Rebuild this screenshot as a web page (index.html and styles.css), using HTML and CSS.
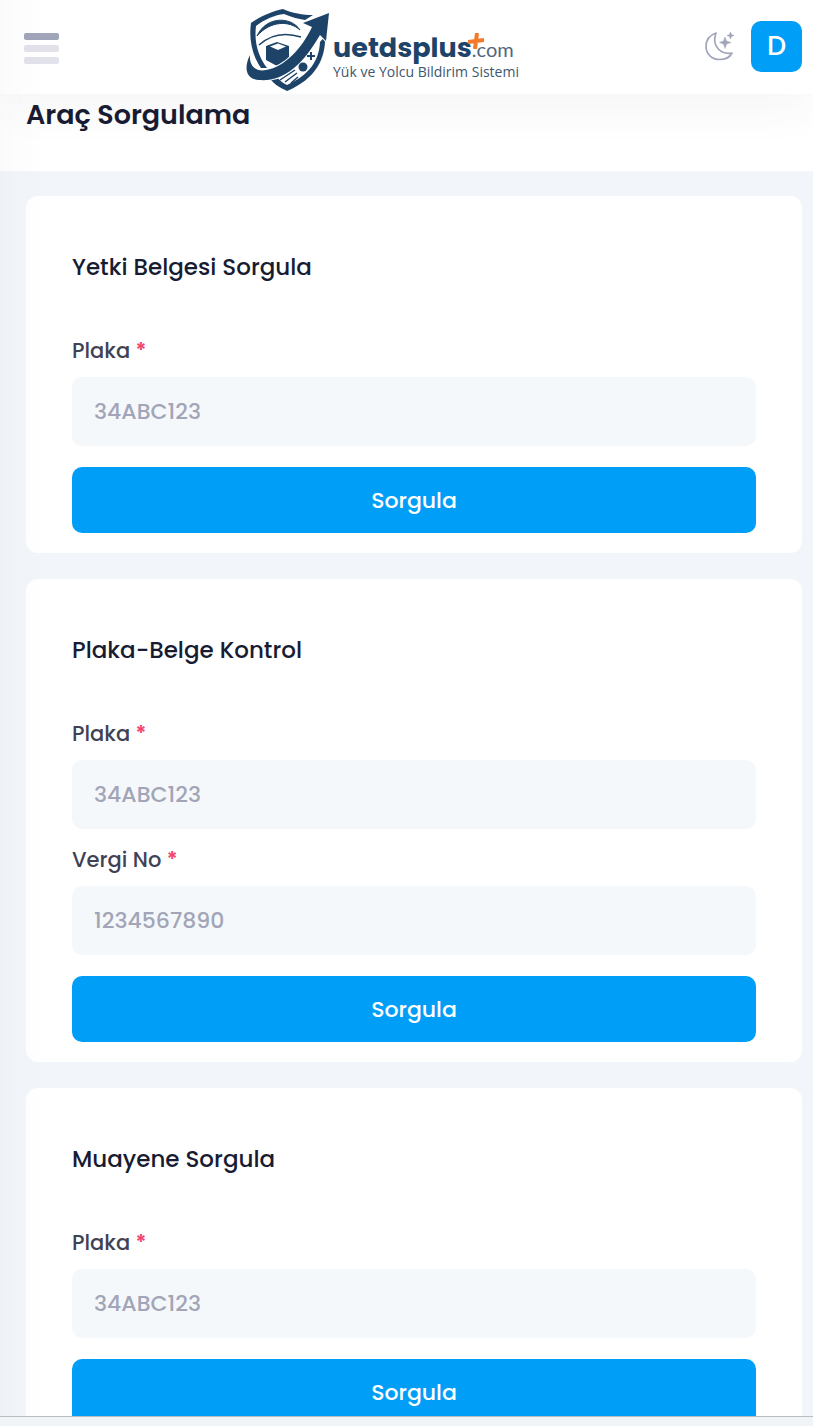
FILE: index.html
```
<!DOCTYPE html>
<html lang="tr">
<head>
<meta charset="utf-8">
<meta name="viewport" content="width=device-width, initial-scale=1">
<title>Araç Sorgulama</title>
<link rel="stylesheet" href="styles.css">
</head>
<body>
<header class="header">
  <button class="menu" type="button" aria-label="Menü">
    <svg width="35" height="32" viewBox="0 0 35 32"><rect y="1" width="35" height="7" rx="2" fill="#a1a5b9"/><rect y="13" width="35" height="7" rx="2" fill="#e2e2ea"/><rect y="25" width="35" height="7" rx="2" fill="#e2e2ea"/></svg>
  </button>
  <a class="brand" href="#">
    <svg class="brand-mark" width="86" height="84" viewBox="0 0 86 84" fill="none" stroke="#1d4468" aria-hidden="true">
      <path d="M68 7C58 7 47 5 38 1C28 3 16 8 6 15C4 29 6 46 16 60L22 60C13 48 9 34 11 18C20 11 30 7 39 6C46 9 53 11 60 12Z" fill="#1d4468" stroke="none"/>
      <path d="M80 28C81 50 71 71 42 83C36 80 30 77 25 71L32 69C35 73 38 75 42 77C64 67 74 53 75 34Z" fill="#1d4468" stroke="none"/>
      <path d="M12 28C21 8 46 8 55 22C44 12 25 13 12 28Z" fill="#1d4468" stroke-width="1"/>
      <path d="M14 37C26 26 40 24 56 29" stroke-width="1.500"/>
      <path d="M21 38L32 34L44 38V52L32 58L21 52Z" fill="#1d4468" stroke="none"/>
      <path d="M25 38.500L33 35.500L41 38.500L33 42Z" fill="#fff" stroke="none"/>
      <path d="M5 47C-1 59 0 71 14 72C38 74 57 58 75 27L81 33L84 5L58 15L67 19C57 40 40 59 21 62C11 64 4 58 5 47Z" fill="#1d4468" stroke="#fff" stroke-width="2" paint-order="stroke"/>
      <circle cx="58" cy="59" r="4.500" fill="#1d4468" stroke="none"/>
      <path d="M62 48H70M66 44V52" stroke-width="2"/>
      <path d="M50 62L35 72M52 65L40 74M53 69L46 75" stroke-width="1.500"/>
    </svg>
    <span class="brand-text">
      <span class="brand-name"><strong>uetdsplus</strong><span class="brand-com">.com</span><svg class="brand-plus" width="16" height="16" viewBox="0 0 16 16"><path d="M9 0L7 16M0 9L16 7" stroke="#f47a2a" stroke-width="4" fill="none"/></svg></span>
      <span class="brand-sub">Yük ve Yolcu Bildirim Sistemi</span>
    </span>
  </a>
  <div class="tools">
    <button class="theme" type="button" aria-label="Tema">
      <svg width="30" height="30" viewBox="0 0 30 30"><path d="M11 2C5 4 1 9 1 15.500C1 23 7 28.500 14.500 28.500C20 28.500 25 26 27 22C17 24 6 16 11 2Z" fill="none" stroke="#a1a5b9" stroke-width="1.700" stroke-linejoin="round"/><path d="M20 6L21.500 10L26 11.500L21.500 13L20 17.500L18.500 13L14.500 11.500L18.500 10ZM25.500 1L26.500 3.500L29 4.500L26.500 5.500L25.500 8L24.500 5.500L22 4.500L24.500 3.500Z" fill="#a1a5b9" stroke="#a1a5b9" stroke-width=".5"/></svg>
    </button>
    <button class="avatar" type="button">D</button>
  </div>
</header>
<div class="titlebar"><h1>Araç Sorgulama</h1></div>
<main class="content">
  <form class="card">
    <h2>Yetki Belgesi Sorgula</h2>
    <div class="field"><label for="p1">Plaka <span class="required">*</span></label><input id="p1" type="text" placeholder="34ABC123"></div>
    <button class="submit" type="button">Sorgula</button>
  </form>
  <form class="card">
    <h2>Plaka-Belge Kontrol</h2>
    <div class="field"><label for="p2">Plaka <span class="required">*</span></label><input id="p2" type="text" placeholder="34ABC123"></div>
    <div class="field"><label for="v2">Vergi No <span class="required">*</span></label><input id="v2" type="text" placeholder="1234567890"></div>
    <button class="submit" type="button">Sorgula</button>
  </form>
  <form class="card">
    <h2>Muayene Sorgula</h2>
    <div class="field"><label for="p3">Plaka <span class="required">*</span></label><input id="p3" type="text" placeholder="34ABC123"></div>
    <button class="submit" type="button">Sorgula</button>
  </form>
</main>
<div class="bottom-edge"></div>
</body>
</html>
```
FILE: styles.css
```
* { box-sizing: border-box; }
body {
  margin: 0;
  height: 100vh;
  display: flex;
  flex-direction: column;
  overflow: hidden;
  background: #f2f6fa;
  color: #181c32;
  font-family: Poppins, Inter, "Noto Sans", sans-serif;
}
body::before {
  content: "";
  position: fixed;
  inset: 0 auto 10px 0;
  width: 44px;
  z-index: 3;
  pointer-events: none;
  background: linear-gradient(to right, rgba(82, 63, 105, 0.02), rgba(82, 63, 105, 0));
}
button { border: 0; padding: 0; background: none; font-family: inherit; cursor: pointer; }
svg { display: block; }
.header {
  position: relative;
  z-index: 2;
  flex: none;
  display: grid;
  grid-template-columns: auto 1fr auto;
  align-items: center;
  min-height: 94px;
  padding: 0 11px 2px 24px;
  background: #fff;
  box-shadow: 0 10px 50px rgba(82, 63, 105, 0.06);
}
.menu { padding-top: 4px; }
.brand { justify-self: center; display: flex; gap: 2px; margin-top: 8px; color: #1d4468; text-decoration: none; }
.brand-text { display: flex; flex-direction: column; padding-top: 25px; white-space: nowrap; }
.brand-name { position: relative; display: flex; align-items: baseline; line-height: 30px; font-size: 27px; }
.brand-name strong { font-weight: 700; }
.brand-com { font-family: Lato, sans-serif; font-size: 20px; color: #52677c; }
.brand-plus { position: absolute; left: 135px; top: 0; }
.brand-sub { font-family: "Open Sans", "Noto Sans", sans-serif; font-size: 14px; line-height: 16px; color: #40566e; }
.tools { display: flex; align-items: center; gap: 16px; }
.avatar {
  width: 51px;
  height: 51px;
  border-radius: 10px;
  background: #009ef7;
  color: #fff;
  font-size: 27px;
  font-weight: 500;
}
.titlebar { flex: none; height: 77px; padding: 0 26px; background: #fff; }
h1 { margin: 0; font-size: 27px; font-weight: 600; line-height: 42px; }
.content {
  flex: 1;
  min-height: 0;
  overflow: hidden;
  display: flex;
  flex-direction: column;
  gap: 26px;
  padding: 25px 11px 0 26px;
}
.card { flex: none; padding: 53px 46px 20px; border-radius: 12px; background: #fff; }
h2 { margin: 0 0 49px; font-size: 23px; font-weight: 500; line-height: 36px; }
.field { margin-bottom: 14px; }
label { display: block; margin-bottom: 9px; font-size: 21px; font-weight: 500; line-height: 34px; color: #3f4254; }
.required { color: #f1416c; font-weight: 600; }
input {
  display: block;
  width: 100%;
  height: 69px;
  padding: 0 22px;
  border: 0;
  border-radius: 10px;
  background: #f5f8fa;
  color: #5e6278;
  font: 500 22px Poppins, Inter, "Noto Sans", sans-serif;
}
input::placeholder { color: #a1a5b7; opacity: 1; }
.submit {
  display: block;
  width: 100%;
  height: 66px;
  margin-top: 21px;
  border-radius: 10px;
  background: #009ef7;
  color: #fff;
  font-size: 22px;
  font-weight: 500;
}
.bottom-edge { flex: none; height: 10px; border-top: 1px solid #b9bdc1; background: #f1f4f6; }
```
